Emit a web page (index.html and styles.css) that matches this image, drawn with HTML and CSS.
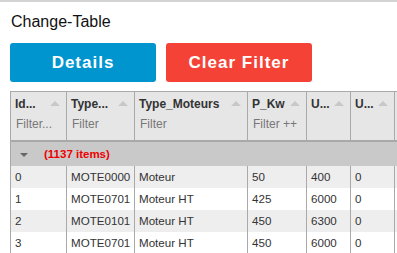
FILE: index.html
```html
<!DOCTYPE html>
<html lang="en">
<head>
    <meta charset="UTF-8">
    <title>Change-Table</title>
    <link rel="stylesheet" href="styles.css">
</head>
<body>
    <div class="page">
        <h1 class="title">Change-Table</h1>

        <div class="actions">
            <button class="btn btn-details">Details</button>
            <button class="btn btn-clear">Clear Filter</button>
        </div>

        <div class="grid-wrap">
            <table class="grid">
                <colgroup>
                    <col class="c-id">
                    <col class="c-type">
                    <col class="c-moteur">
                    <col class="c-pkw">
                    <col class="c-u">
                    <col class="c-u">
                    <col class="c-rest">
                </colgroup>
                <thead>
                    <tr>
                        <th>
                            <div class="head-title"><span>Id...</span><i class="sort"></i></div>
                            <div class="head-filter">Filter...</div>
                        </th>
                        <th>
                            <div class="head-title"><span>Type...</span><i class="sort"></i></div>
                            <div class="head-filter">Filter</div>
                        </th>
                        <th>
                            <div class="head-title"><span>Type_Moteurs</span><i class="sort"></i></div>
                            <div class="head-filter">Filter</div>
                        </th>
                        <th>
                            <div class="head-title"><span>P_Kw</span><i class="sort"></i></div>
                            <div class="head-filter">Filter ++</div>
                        </th>
                        <th>
                            <div class="head-title"><span>U...</span><i class="sort"></i></div>
                            <div class="head-filter"></div>
                        </th>
                        <th>
                            <div class="head-title"><span>U...</span><i class="sort"></i></div>
                            <div class="head-filter"></div>
                        </th>
                        <th></th>
                    </tr>
                </thead>
                <tbody>
                    <tr class="group-row">
                        <td colspan="7"><i class="caret"></i><span class="count">(1137 items)</span></td>
                    </tr>
                    <tr class="odd">
                        <td>0</td><td>MOTE0000</td><td>Moteur</td><td>50</td><td>400</td><td>0</td><td></td>
                    </tr>
                    <tr>
                        <td>1</td><td>MOTE0701</td><td>Moteur HT</td><td>425</td><td>6000</td><td>0</td><td></td>
                    </tr>
                    <tr class="odd">
                        <td>2</td><td>MOTE0101</td><td>Moteur HT</td><td>450</td><td>6300</td><td>0</td><td></td>
                    </tr>
                    <tr>
                        <td>3</td><td>MOTE0701</td><td>Moteur HT</td><td>450</td><td>6000</td><td>0</td><td></td>
                    </tr>
                </tbody>
            </table>
        </div>
    </div>
</body>
</html>
```

FILE: styles.css
```css
:root {
    --blue: #0095cf;
    --red: #f44336;
    --grid-border: #a9a9a9;
    --head-bg: #e6e6e6;
    --text: #333;
}

* {
    margin: 0;
    padding: 0;
    box-sizing: border-box;
}

html, body {
    overflow: hidden;
}

body {
    font-family: "Liberation Sans", Arial, sans-serif;
    background: white;
    color: #111;
    border-top: 2px solid #d3d3d3;
}

.page {
    padding: 11px 0 0 10px;
}

.title {
    font-size: 16px;
    font-weight: normal;
    line-height: 18px;
    padding-left: 1px;
}

.actions {
    display: flex;
    gap: 10px;
    margin-top: 12px;
}

.btn {
    height: 39px;
    border: none;
    border-radius: 3px;
    color: white;
    font-family: inherit;
    font-size: 17px;
    font-weight: bold;
    letter-spacing: 1px;
    cursor: pointer;
}

.btn-details {
    width: 146px;
    background-color: var(--blue);
}

.btn-clear {
    width: 146px;
    background-color: var(--red);
}

.grid-wrap {
    margin-top: 9px;
    overflow: hidden;
}

.grid {
    border-collapse: collapse;
    table-layout: fixed;
    width: 500px;
    font-size: 11.6px;
    color: var(--text);
}

.c-id { width: 56px; }
.c-type { width: 68px; }
.c-moteur { width: 113px; }
.c-pkw { width: 59px; }
.c-u { width: 44px; }
.c-rest { width: 116px; }

.grid th {
    background: var(--head-bg);
    border: 1px solid var(--grid-border);
    border-bottom: 2px solid var(--grid-border);
    text-align: left;
    vertical-align: top;
    height: 49px;
    padding: 2px 4px 0 4px;
    font-size: 12px;
}

.head-title {
    display: flex;
    justify-content: space-between;
    align-items: center;
    height: 19px;
    font-weight: bold;
    white-space: nowrap;
}

.sort {
    width: 0;
    height: 0;
    border-left: 5px solid transparent;
    border-right: 5px solid transparent;
    border-bottom: 5px solid #c8c8c8;
    margin-right: 2px;
}

.head-filter {
    height: 22px;
    line-height: 22px;
    font-weight: normal;
    color: #777;
    padding-left: 1px;
    white-space: nowrap;
}

.grid td {
    border-left: 1px solid var(--grid-border);
    border-right: 1px solid var(--grid-border);
    height: 22px;
    padding: 0 4px;
    white-space: nowrap;
    overflow: hidden;
}

.group-row td {
    background: #c9c9c9;
    height: 25px;
    padding-left: 9px;
}

.caret {
    display: inline-block;
    width: 0;
    height: 0;
    border-left: 4px solid transparent;
    border-right: 4px solid transparent;
    border-top: 4px solid #666;
    vertical-align: middle;
    margin-right: 16px;
}

.count {
    color: #e00;
    font-weight: bold;
    font-size: 11.5px;
}

.odd td {
    background: #eeeeee;
}
```
